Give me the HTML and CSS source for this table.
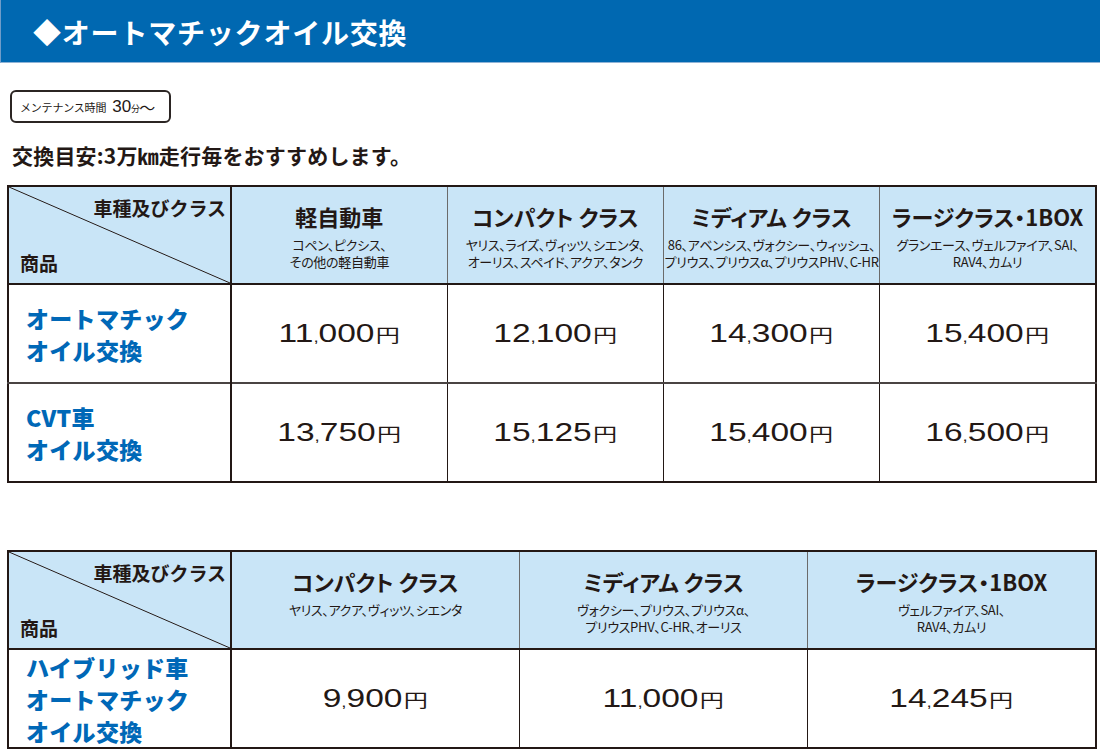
FILE: index.html
```html
<!DOCTYPE html>
<html lang="ja">
<head>
<meta charset="utf-8">
<title>オートマチックオイル交換</title>
<link rel="stylesheet" href="styles.css">
</head>
<body>
<header class="title-bar"><h1 class="title">◆オートマチックオイル交換</h1></header>

<div class="badge"><span class="badge-label">メンテナンス時間</span><span class="badge-num">30</span><span class="badge-unit">分</span><span class="badge-tilde">〜</span></div>

<p class="lead">交換目安:3万㎞走行毎をおすすめします。</p>

<table class="price-table t1">
  <colgroup><col class="c-first"><col><col><col><col></colgroup>
  <thead>
    <tr>
      <th class="corner"><div class="corner-in"><span class="corner-top">車種及びクラス</span><span class="corner-bottom">商品</span></div></th>
      <th class="cls"><div class="cls-name">軽自動車</div><div class="cls-cars">コペン、ピクシス、<br>その他の軽自動車</div></th>
      <th class="cls"><div class="cls-name">コンパクト クラス</div><div class="cls-cars">ヤリス、ライズ、ヴィッツ、シエンタ、<br>オーリス、スペイド、アクア、タンク</div></th>
      <th class="cls"><div class="cls-name">ミディアム クラス</div><div class="cls-cars">86、アベンシス、ヴォクシー、ウィッシュ、<br>プリウス、プリウスα、プリウスPHV、C-HR</div></th>
      <th class="cls"><div class="cls-name">ラージクラス・1BOX</div><div class="cls-cars">グランエース、ヴェルファイア、SAI、<br>RAV4、カムリ</div></th>
    </tr>
  </thead>
  <tbody>
    <tr>
      <td class="item">オートマチック<br>オイル交換</td>
      <td class="cost"><span class="price">11<span class="comma">,</span>000<span class="yen">円</span></span></td>
      <td class="cost"><span class="price">12<span class="comma">,</span>100<span class="yen">円</span></span></td>
      <td class="cost"><span class="price">14<span class="comma">,</span>300<span class="yen">円</span></span></td>
      <td class="cost"><span class="price">15<span class="comma">,</span>400<span class="yen">円</span></span></td>
    </tr>
    <tr>
      <td class="item">CVT車<br>オイル交換</td>
      <td class="cost"><span class="price">13<span class="comma">,</span>750<span class="yen">円</span></span></td>
      <td class="cost"><span class="price">15<span class="comma">,</span>125<span class="yen">円</span></span></td>
      <td class="cost"><span class="price">15<span class="comma">,</span>400<span class="yen">円</span></span></td>
      <td class="cost"><span class="price">16<span class="comma">,</span>500<span class="yen">円</span></span></td>
    </tr>
  </tbody>
</table>

<table class="price-table t2">
  <colgroup><col class="c-first"><col><col><col></colgroup>
  <thead>
    <tr>
      <th class="corner"><div class="corner-in"><span class="corner-top">車種及びクラス</span><span class="corner-bottom">商品</span></div></th>
      <th class="cls"><div class="cls-name">コンパクト クラス</div><div class="cls-cars">ヤリス、アクア、ヴィッツ、シエンタ</div></th>
      <th class="cls"><div class="cls-name">ミディアム クラス</div><div class="cls-cars">ヴォクシー、プリウス、プリウスα、<br>プリウスPHV、C-HR、オーリス</div></th>
      <th class="cls"><div class="cls-name">ラージクラス・1BOX</div><div class="cls-cars">ヴェルファイア、SAI、<br>RAV4、カムリ</div></th>
    </tr>
  </thead>
  <tbody>
    <tr>
      <td class="item">ハイブリッド車<br>オートマチック<br>オイル交換</td>
      <td class="cost"><span class="price">9<span class="comma">,</span>900<span class="yen">円</span></span></td>
      <td class="cost"><span class="price">11<span class="comma">,</span>000<span class="yen">円</span></span></td>
      <td class="cost"><span class="price">14<span class="comma">,</span>245<span class="yen">円</span></span></td>
    </tr>
  </tbody>
</table>
</body>
</html>
```

FILE: styles.css
```css
html, body {
  margin: 0;
  padding: 0;
  background: #ffffff;
}
body {
  font-family: "Noto Sans CJK JP", "Noto Sans", sans-serif;
  color: #231815;
  width: 1100px;
}

.title-bar {
  background: #0068b1;
  border-left: 1px solid #6f9cc9;
  border-bottom: 1px solid #8fb3d6;
  display: flex;
  align-items: center;
  padding-left: 32px;
  box-sizing: border-box;
  height: 63px;
}
.title {
  margin: 0;
  font-size: 28px;
  font-weight: 700;
  color: #ffffff;
  letter-spacing: 0.8px;
  line-height: 34px;
  padding-top: 2px;
}

.badge {
  margin: 27px 0 0 10px;
  width: 161px;
  height: 33px;
  box-sizing: border-box;
  border: 2px solid #2b2523;
  border-radius: 6px;
  display: flex;
  align-items: center;
  padding: 0 0 0 8px;
  white-space: nowrap;
}
.badge-label {
  font-size: 11px;
  letter-spacing: -0.2px;
  margin-right: 6px;
}
.badge-num {
  font-family: "Liberation Sans", Arial, sans-serif;
  font-size: 17px;
}
.badge-unit {
  font-size: 9px;
  margin-top: 4px;
}
.badge-tilde {
  font-size: 16px;
  margin-left: -1px;
}

.lead {
  margin: 20px 0 0 12px;
  font-size: 21px;
  line-height: 24px;
  font-weight: 700;
  letter-spacing: 0.2px;
}

.price-table {
  margin-left: 7px;
  width: 1090px;
  table-layout: fixed;
  border-collapse: collapse;
  border: 2px solid #231815;
}
.t1 { margin-top: 18px; }
.t2 { margin-top: 67px; }

.c-first { width: 223px; }

.price-table th,
.price-table td {
  padding: 0;
  border: 1px solid #231815;
}
.price-table thead th {
  height: 96px;
  background-color: #c9e5f7;
  vertical-align: top;
  border-left-color: #6b6b6b;
  border-right-color: #6b6b6b;
  border-bottom: 2px solid #231815;
}
.price-table th.corner {
  border-right: 2px solid #231815;
  background-image: linear-gradient(to top right, transparent calc(50% - 0.9px), #231815 50%, transparent calc(50% + 0.9px));
}
.corner-in {
  height: 96px;
  box-sizing: border-box;
  display: flex;
  flex-direction: column;
  justify-content: space-between;
  padding: 9px 4px 8px 11px;
}
.corner-top {
  align-self: flex-end;
  font-size: 19px;
  line-height: 24px;
  font-weight: 700;
}
.corner-bottom {
  align-self: flex-start;
  font-size: 19px;
  line-height: 24px;
  font-weight: 700;
}

.cls {
  text-align: center;
  font-weight: 400;
}
.cls-name {
  margin-top: 15px;
  font-size: 22px;
  line-height: 28px;
  font-weight: 700;
  white-space: nowrap;
  font-feature-settings: "palt";
}
.cls-cars {
  margin-top: 6px;
  font-size: 13px;
  line-height: 17px;
  white-space: nowrap;
  font-feature-settings: "palt";
  letter-spacing: -0.3px;
}

.price-table tbody td {
  height: 97px;
  border-top: 2px solid #4a4443;
}
.price-table td.item {
  border-right: 2px solid #231815;
  padding-left: 17px;
  color: #0068b7;
  font-size: 23px;
  line-height: 32px;
  font-weight: 900;
  letter-spacing: 0.3px;
  vertical-align: middle;
}
.price-table td.cost {
  text-align: center;
  vertical-align: middle;
}
.price {
  display: inline-block;
  font-family: "Liberation Sans", Arial, sans-serif;
  font-size: 25px;
  letter-spacing: 0;
  transform: scaleX(1.34);
  color: #231815;
}
.comma {
  font-size: 14px;
}
.yen {
  font-family: "Noto Sans CJK JP", sans-serif;
  font-size: 18px;
  margin-left: 1px;
}
```
